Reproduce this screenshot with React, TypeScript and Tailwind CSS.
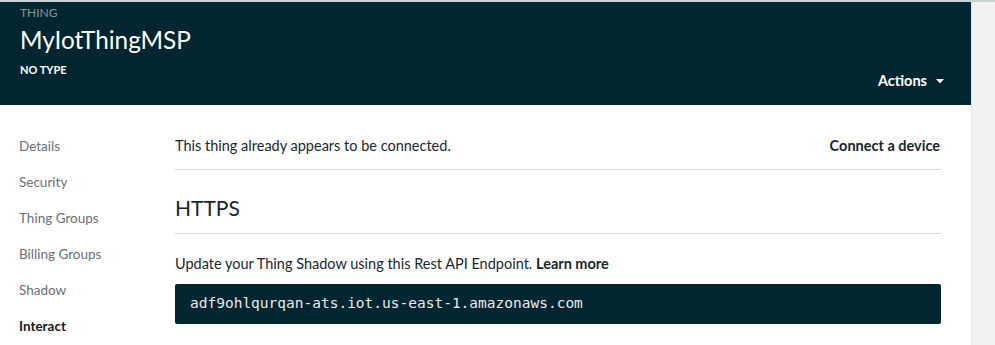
const navItems = ["Details", "Security", "Thing Groups", "Billing Groups", "Shadow", "Interact"]

const App = () => {
    return (
        <div className="h-[345px] w-[995px] overflow-hidden bg-[#f2f2f2] font-['Lato',sans-serif]">
            {/* TOP LINE */}
            <div className="h-[2px] w-full bg-[#c9d2d6]" />

            <div className="flex">
                <div className="w-[971px] shrink-0">
                    {/* HEADER */}
                    <div className="flex h-[103px] items-end justify-between bg-[#022630] pl-5 pr-[27px]">
                        <div className="flex h-full flex-col">
                            <div className="mt-[4px] text-[12px] leading-[14px] text-[#8a9799]">THING</div>
                            <div className="mt-[6px] text-[24.3px] leading-[28px] text-white">MyIotThingMSP</div>
                            <div className="mt-[9px] text-[11px] font-bold leading-[14px] text-white">NO TYPE</div>
                        </div>
                        <button className="mb-[14px] flex h-[20px] items-center gap-[9px] text-[14.5px] font-bold text-white">
                            Actions
                            <svg width="8" height="5" viewBox="0 0 8 5">
                                <path d="M0 0h8L4 4.5z" fill="white" />
                            </svg>
                        </button>
                    </div>

                    {/* BODY */}
                    <div className="flex h-[240px] bg-white">
                        {/* SIDEBAR */}
                        <nav className="flex w-[175px] shrink-0 flex-col gap-[16px] pl-[19px] pt-[31px]">
                            {navItems.map((item) => (
                                <div
                                    key={item}
                                    className={
                                        item === "Interact"
                                            ? "text-[13.5px] font-bold leading-[20px] text-[#16191f]"
                                            : "text-[13.5px] leading-[20px] text-[#687078]"
                                    }
                                >
                                    {item}
                                </div>
                            ))}
                        </nav>

                        {/* CONTENT */}
                        <div className="w-[766px] pt-[31px] text-[#16282f]">
                            <div className="flex items-center justify-between pb-[13px] text-[14.5px] leading-[20px]">
                                <span>This thing already appears to be connected.</span>
                                <span className="mr-[1px] font-bold">Connect a device</span>
                            </div>
                            <div className="h-px bg-[#d5d9d9]" />

                            <div className="pb-[14px] pt-[27px] text-[21px] leading-[22px]">HTTPS</div>
                            <div className="h-px bg-[#d5d9d9]" />

                            <div className="mt-[20px] text-[14.5px] leading-[20px]">
                                Update your Thing Shadow using this Rest API Endpoint. <span className="font-bold">Learn more</span>
                            </div>
                            <div className="mt-[10px] flex h-[40px] items-center rounded-[2px] bg-[#022630] px-[15px] font-['DejaVu_Sans_Mono',monospace] text-[14.5px] text-[#e6eaea]">
                                adf9ohlqurqan-ats.iot.us-east-1.amazonaws.com
                            </div>
                        </div>
                    </div>
                </div>

                {/* RIGHT STRIP */}
                <div className="h-[343px] w-px bg-[#e4e4e4]" />
            </div>
        </div>
    )
}

export default App
